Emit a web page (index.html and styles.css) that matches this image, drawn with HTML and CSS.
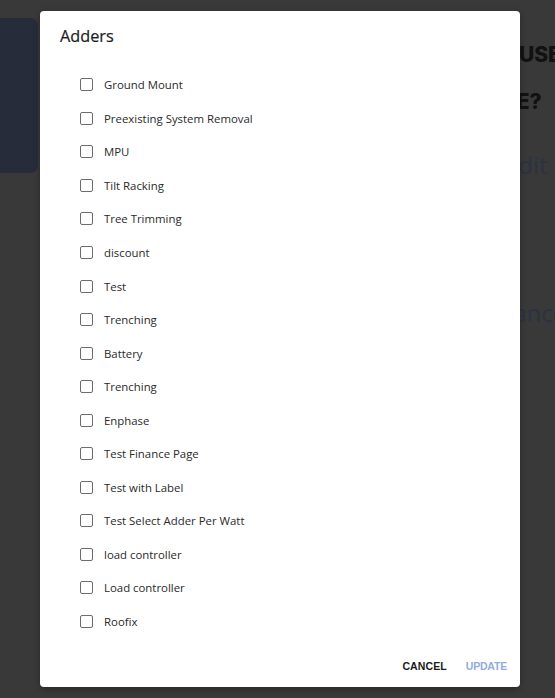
FILE: index.html
```html
<!DOCTYPE html>
<html>
<head>
<meta charset="utf-8">
<link rel="stylesheet" href="styles.css">
</head>
<body>
<div class="page">
  <div class="card"></div>
  <div class="side">
    <div class="h1">HOUSE</div>
    <div class="h2">ME?</div>
    <div class="link l1">Edit</div>
    <div class="link l2">Finance</div>
  </div>
</div>
<div class="dialog">
  <h2 class="title">Adders</h2>
  <ul class="list">
    <li class="row"><span class="box"></span><span class="label">Ground Mount</span></li>
    <li class="row"><span class="box"></span><span class="label">Preexisting System Removal</span></li>
    <li class="row"><span class="box"></span><span class="label">MPU</span></li>
    <li class="row"><span class="box"></span><span class="label">Tilt Racking</span></li>
    <li class="row"><span class="box"></span><span class="label">Tree Trimming</span></li>
    <li class="row"><span class="box"></span><span class="label">discount</span></li>
    <li class="row"><span class="box"></span><span class="label">Test</span></li>
    <li class="row"><span class="box"></span><span class="label">Trenching</span></li>
    <li class="row"><span class="box"></span><span class="label">Battery</span></li>
    <li class="row"><span class="box"></span><span class="label">Trenching</span></li>
    <li class="row"><span class="box"></span><span class="label">Enphase</span></li>
    <li class="row"><span class="box"></span><span class="label">Test Finance Page</span></li>
    <li class="row"><span class="box"></span><span class="label">Test with Label</span></li>
    <li class="row"><span class="box"></span><span class="label">Test Select Adder Per Watt</span></li>
    <li class="row"><span class="box"></span><span class="label">load controller</span></li>
    <li class="row"><span class="box"></span><span class="label">Load controller</span></li>
    <li class="row"><span class="box"></span><span class="label">Roofix</span></li>
  </ul>
  <div class="actions">
    <button class="btn cancel">CANCEL</button>
    <button class="btn update">UPDATE</button>
  </div>
</div>
</body>
</html>
```
FILE: styles.css
```css
html, body {
  margin: 0;
  padding: 0;
}
body {
  width: 555px;
  height: 698px;
  overflow: hidden;
  background: #393939;
  font-family: "Open Sans", sans-serif;
  position: relative;
}
.page {
  display: flex;
  align-items: flex-start;
  padding-top: 18px;
  width: 555px;
  height: 698px;
  overflow: hidden;
  box-sizing: border-box;
}
.card {
  width: 48px;
  height: 155px;
  margin-left: -10px;
  background: #262c39;
  border-radius: 8px;
  flex: none;
}
.side {
  margin-left: 482px;
  width: 100px;
  flex: none;
  white-space: nowrap;
}
.h1, .h2 {
  font-family: "Inter", sans-serif;
  font-weight: 800;
  font-size: 21px;
  color: #111;
  line-height: 24px;
}
.h1 { margin-top: 25px; text-indent: -33px; }
.h2 { margin-top: 23px; text-indent: -23px; }
.link {
  font-family: "Open Sans", sans-serif;
  font-size: 24px;
  color: #2b3242;
  line-height: 26px;
}
.l1 { margin-top: 38px; text-indent: -15px; }
.l2 { margin-top: 122px; text-indent: -40px; }

.dialog {
  position: absolute;
  left: 40px;
  top: 11px;
  width: 480px;
  height: 676px;
  background: #fff;
  border-radius: 4px;
  box-shadow: 0 2px 6px rgba(0,0,0,0.3);
  display: flex;
  flex-direction: column;
  box-sizing: border-box;
}
.title {
  margin: 13px 0 0 20px;
  font-size: 16.3px;
  font-weight: 500;
  line-height: 24px;
  color: #1c1c1c;
  -webkit-text-stroke: 0.2px #1c1c1c;
}
.list {
  list-style: none;
  margin: 20px 0 0 0;
  padding: 0 0 0 40px;
}
.row {
  height: 33.56px;
  display: flex;
  align-items: center;
}
.box {
  width: 11px;
  height: 11px;
  border: 1.6px solid #6c6c6c;
  border-radius: 2px;
  flex: none;
}
.label {
  margin-left: 11px;
  font-size: 11.4px;
  color: #2a2a2a;
}
.actions {
  margin-top: auto;
  display: flex;
  justify-content: flex-end;
  gap: 19px;
  padding: 0 13px 5px 0;
}
.btn {
  border: none;
  background: none;
  padding: 8px 0;
  height: 16px;
  box-sizing: content-box;
  font-family: "Liberation Sans", sans-serif;
  font-weight: 700;
  font-size: 10.5px;
  letter-spacing: 0.1px;
  line-height: 16px;
}
.cancel { color: #1b1b1b; }
.update { color: #91abe3; letter-spacing: -0.2px; }
```
